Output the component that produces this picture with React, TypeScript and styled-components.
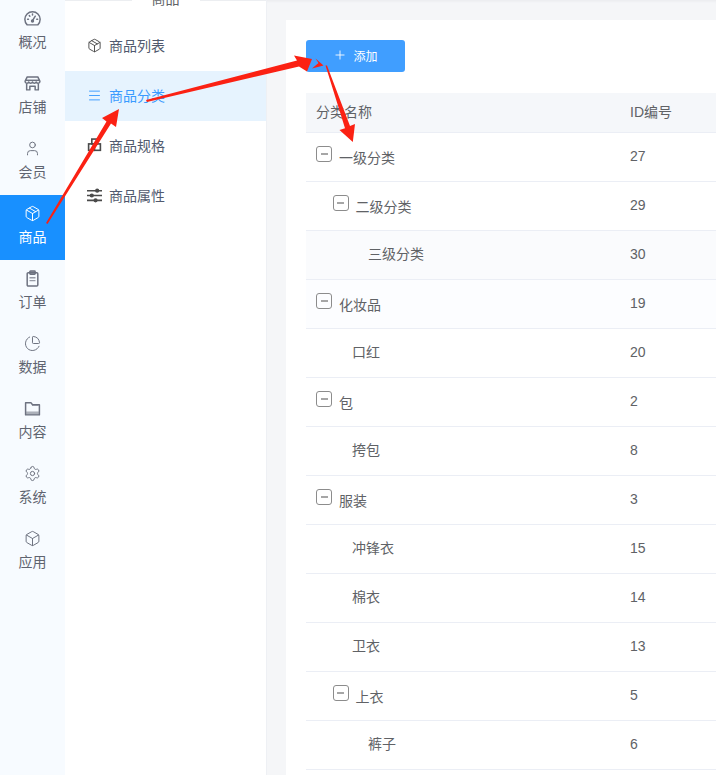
import React from "react";
import styled, { createGlobalStyle } from "styled-components";
import { User, Package, PieChart, Settings, Box, Menu, Plus } from "lucide-react";

const Global = createGlobalStyle`
  html, body { margin: 0; padding: 0; height: 100%; overflow: hidden; background: #f5f6f8; }
  body { font-family: "Liberation Sans", "Noto Sans CJK SC", sans-serif; font-size: 14px; color: #606266; }
  #root { height: 100%; }
  * { box-sizing: border-box; }
`;

const Page = styled.div`
  position: relative;
  display: flex;
  width: 716px;
  height: 775px;
  overflow: hidden;
`;
const Rail = styled.nav`
  flex: 0 0 65px;
  background: #f7fbff;
  display: flex;
  flex-direction: column;
`;
const RailItem = styled.div<{ $active?: boolean }>`
  height: 65px;
  display: flex;
  flex-direction: column;
  align-items: center;
  padding-top: 10px;
  gap: 5px;
  line-height: 20px;
  background: ${(p) => (p.$active ? "#1890ff" : "transparent")};
  color: ${(p) => (p.$active ? "#fff" : "#5f6470")};
  svg {
    width: 17px;
    height: 17px;
    stroke-width: 1.4;
    flex: none;
    color: ${(p) => (p.$active ? "#fff" : "#6d7280")};
  }
`;
const SubPanel = styled.aside`
  flex: 0 0 202px;
  background: #fff;
  border-right: 1px solid #eef0f4;
  box-shadow: inset 0 1px 0 #eceef1;
  display: flex;
  flex-direction: column;
`;
const SubTitle = styled.div`
  align-self: center;
  margin-top: -11px;
  height: 32px;
  width: 68px;
  background: #fff;
  text-align: center;
  line-height: 20px;
  color: #606266;
`;
const SubItem = styled.div<{ $active?: boolean }>`
  height: 50px;
  display: flex;
  align-items: center;
  gap: 7px;
  padding: 0 0 2px 22px;
  background: ${(p) => (p.$active ? "#e6f3fe" : "transparent")};
  color: ${(p) => (p.$active ? "#3a9bff" : "#515a6e")};
  svg { width: 15px; height: 15px; stroke-width: 1.5; color: ${(p) => (p.$active ? "#3a9bff" : "#4a4a4a")}; }
`;
const Main = styled.main`
  flex: 1;
  min-width: 0;
  padding: 20px 0 0 19px;
  background: #f5f6f8;
  box-shadow: inset 0 3px 3px -2px #e8e9ec;
`;
const Card = styled.section`
  background: #fff;
  padding: 20px 0 0 20px;
  height: 100%;
  width: 520px;
`;
const AddButton = styled.button`
  width: 99px;
  height: 32px;
  border: none;
  border-radius: 3px;
  background: #409eff;
  color: #fff;
  font-family: inherit;
  font-size: 12px;
  display: flex;
  align-items: center;
  justify-content: center;
  gap: 6px;
  padding: 0 0 2px 0;
  margin-bottom: 21px;
  svg { width: 14px; height: 14px; stroke-width: 1.5; }
`;
const Table = styled.div`
  width: 500px;
`;
const HeadRow = styled.div`
  display: grid;
  grid-template-columns: 314px 1fr;
  height: 40px;
  align-items: center;
  background: #f5f7fa;
  border-bottom: 1px solid #ebeef5;
  padding: 0 0 4px 10px;
  color: #606266;
`;
const Row = styled.div<{ $tint?: string }>`
  display: grid;
  grid-template-columns: 314px 1fr;
  height: 49px;
  align-items: center;
  border-bottom: 1px solid #ebeef5;
  padding: 0 0 2px 10px;
  background: ${(p) => p.$tint || "transparent"};
  color: #606266;
`;
const NameCell = styled.div<{ $indent: number; $open?: boolean }>`
  display: flex;
  align-items: center;
  padding-left: ${(p) => p.$indent}px;
  padding-bottom: ${(p) => (p.$open ? "0" : "2px")};
`;
const Toggle = styled.span`
  flex: 0 0 16px;
  width: 16px;
  height: 16px;
  border: 1.5px solid #8c8c8c;
  border-radius: 3px;
  margin-right: 7px;
  display: flex;
  align-items: center;
  justify-content: center;
  position: relative;
  top: -2px;
  &::before {
    content: "";
    width: 7px;
    height: 2px;
    background: #a6a6a6;
  }
`;
const NameText = styled.span<{ $lower?: boolean }>`
  position: relative;
  top: ${(p) => (p.$lower ? "1px" : "0")};
`;
const Arrows = styled.svg`
  position: absolute;
  inset: 0;
  pointer-events: none;
`;

const GaugeIcon = () => (
  <svg viewBox="0 0 16 16" fill="none" stroke="currentColor" strokeLinecap="round" strokeLinejoin="round">
    <path d="M3 14C1.6 12.7.8 10.9.8 8.8a7.2 7.2 0 0 1 14.4 0c0 2.1-.8 3.9-2.2 5.2z" />
    <path d="M8 10l2.6-4.2" />
    <circle cx="8" cy="10.3" r=".9" fill="currentColor" />
    <path d="M3.4 8.8h.8M12 8.8h.8M5 5.3l.5.5M8 3.8v.8" />
  </svg>
);
const StoreIcon = () => (
  <svg viewBox="0 0 16 16" fill="none" stroke="currentColor" strokeLinejoin="round">
    <path d="M3 1.8h10l2 4.2a1.8 1.8 0 0 1-3.5.6 1.9 1.9 0 0 1-3.5 0 1.9 1.9 0 0 1-3.5 0A1.8 1.8 0 0 1 1 6z" />
    <path d="M2.5 8.5V14h3v-3.5h5V14h3V8.5" />
    <path d="M1.5 5h13" />
  </svg>
);
const ClipboardIcon = () => (
  <svg viewBox="0 0 16 16" fill="none" stroke="currentColor" strokeLinejoin="round">
    <rect x="3" y="2.5" width="10" height="12.5" rx="1" />
    <rect x="5.5" y="1" width="5" height="3" rx=".6" fill="currentColor" fillOpacity=".5" />
    <path d="M5.2 7.2h5.6M5.2 10h5.6" strokeOpacity=".7" />
  </svg>
);
const FolderIcon = () => (
  <svg viewBox="0 0 16 16" fill="none" stroke="currentColor" strokeLinejoin="round">
    <path d="M1.5 2.5h5l1.5 2h6.5v9.5h-13z" />
    <path d="M2 10.8h12V14H2z" fill="currentColor" fillOpacity=".55" stroke="none" />
    <path d="M7.5 4.5h6" />
  </svg>
);
const SpecIcon = () => (
  <svg viewBox="0 0 14 14" fill="none" stroke="currentColor">
    <rect x="1.5" y="5.5" width="5" height="6" />
    <rect x="7" y="5.5" width="5.5" height="6" />
    <rect x="4.5" y="1" width="5" height="4.5" />
  </svg>
);
const SlidersIcon = () => (
  <svg viewBox="0 0 14 14" fill="none" stroke="currentColor" strokeWidth=".9">
    <path d="M0 2.5h14M0 7h14M0 11.5h14" />
    <circle cx="9.5" cy="2.5" r="1.2" fill="currentColor" />
    <circle cx="4.5" cy="7" r="1.2" fill="currentColor" />
    <circle cx="8" cy="11.5" r="1.2" fill="currentColor" />
  </svg>
);

const rail = [
  ["概况", GaugeIcon], ["店铺", StoreIcon], ["会员", User], ["商品", Package], ["订单", ClipboardIcon],
  ["数据", PieChart], ["内容", FolderIcon], ["系统", Settings], ["应用", Box],
] as const;
const sub = [
  ["商品列表", Package], ["商品分类", Menu], ["商品规格", SpecIcon], ["商品属性", SlidersIcon],
] as const;
const rows: { n: string; id: number; lvl: number; open?: boolean; tint?: string }[] = [
  { n: "一级分类", id: 27, lvl: 0, open: true },
  { n: "二级分类", id: 29, lvl: 1, open: true },
  { n: "三级分类", id: 30, lvl: 2, tint: "#fafbfd" },
  { n: "化妆品", id: 19, lvl: 0, open: true, tint: "#fcfdff" },
  { n: "口红", id: 20, lvl: 1 },
  { n: "包", id: 2, lvl: 0, open: true },
  { n: "挎包", id: 8, lvl: 1 },
  { n: "服装", id: 3, lvl: 0, open: true },
  { n: "冲锋衣", id: 15, lvl: 1 },
  { n: "棉衣", id: 14, lvl: 1 },
  { n: "卫衣", id: 13, lvl: 1 },
  { n: "上衣", id: 5, lvl: 1, open: true },
  { n: "裤子", id: 6, lvl: 2 },
];

export default function App() {
  return (
    <Page>
      <Global />
      <Rail>
        {rail.map(([label, Icon]) => (
          <RailItem key={label} $active={label === "商品"}>
            <Icon />
            {label}
          </RailItem>
        ))}
      </Rail>
      <SubPanel>
        <SubTitle>商品</SubTitle>
        {sub.map(([label, Icon]) => (
          <SubItem key={label} $active={label === "商品分类"}>
            <Icon />
            {label}
          </SubItem>
        ))}
      </SubPanel>
      <Main>
        <Card>
          <AddButton><Plus />添加</AddButton>
          <Table>
            <HeadRow><span>分类名称</span><span>ID编号</span></HeadRow>
            {rows.map((r) => (
              <Row key={r.n} $tint={r.tint}>
                <NameCell $open={r.open} $indent={r.open ? r.lvl * 16.5 : r.lvl === 1 ? 36 : 52}>
                  {r.open && <Toggle />}
                  <NameText $lower={r.open}>{r.n}</NameText>
                </NameCell>
                <span>{r.id}</span>
              </Row>
            ))}
          </Table>
        </Card>
      </Main>
      <Arrows width="716" height="775" viewBox="0 0 716 775">
        <polygon fill="#fb2113" points="46,223 106.5,121.5 102,118 119,109 116,127 111,123.5 47.5,224" />
        <polygon fill="#fb2113" points="146,100 297,60.5 294,55.5 312,59 307,71.5 299,66.5 147,102" />
        <polygon fill="#fb2113" points="312,68.5 318.5,63 315.5,58.5 323.5,65.5" />
        <polygon fill="#fb2113" points="325.5,65.5 327,65.5 350,126 355,124 352.8,142 339.5,130 345,128.3" />
      </Arrows>
    </Page>
  );
}
